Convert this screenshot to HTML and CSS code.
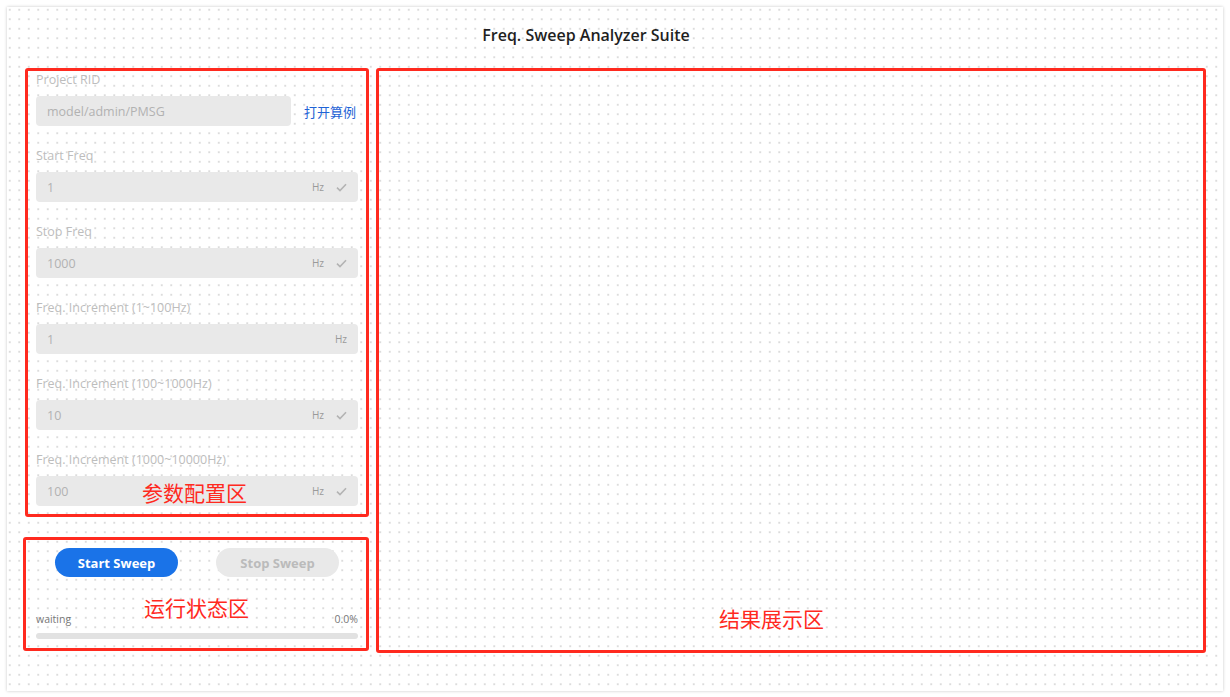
FILE: index.html
```html
<!DOCTYPE html>
<html lang="zh">
<head>
<meta charset="utf-8">
<title>Freq. Sweep Analyzer Suite</title>
<link rel="stylesheet" href="styles.css">
</head>
<body>
<div class="card">
  <h1 class="title">Freq. Sweep Analyzer Suite</h1>
  <div class="main">
    <div class="left">
      <div class="config redbox">
        <div class="field">
          <div class="label">Project RID</div>
          <div class="row">
            <div class="input short"><span class="val">model/admin/PMSG</span></div>
            <a class="link">打开算例</a>
          </div>
        </div>
        <div class="field">
          <div class="label">Start Freq</div>
          <div class="input"><span class="val">1</span><span class="unit">Hz</span><svg class="check" width="11" height="9" viewBox="0 0 11 9"><path d="M1 4.6 L4 7.6 L10 1.2" fill="none" stroke="#b3b3b3" stroke-width="1.6"/></svg></div>
        </div>
        <div class="field">
          <div class="label">Stop Freq</div>
          <div class="input"><span class="val">1000</span><span class="unit">Hz</span><svg class="check" width="11" height="9" viewBox="0 0 11 9"><path d="M1 4.6 L4 7.6 L10 1.2" fill="none" stroke="#b3b3b3" stroke-width="1.6"/></svg></div>
        </div>
        <div class="field">
          <div class="label">Freq. Increment (1~100Hz)</div>
          <div class="input"><span class="val">1</span><span class="unit last">Hz</span></div>
        </div>
        <div class="field">
          <div class="label">Freq. Increment (100~1000Hz)</div>
          <div class="input"><span class="val">10</span><span class="unit">Hz</span><svg class="check" width="11" height="9" viewBox="0 0 11 9"><path d="M1 4.6 L4 7.6 L10 1.2" fill="none" stroke="#b3b3b3" stroke-width="1.6"/></svg></div>
        </div>
        <div class="field">
          <div class="label">Freq. Increment (1000~10000Hz)</div>
          <div class="input"><span class="val">100</span><span class="unit">Hz</span><svg class="check" width="11" height="9" viewBox="0 0 11 9"><path d="M1 4.6 L4 7.6 L10 1.2" fill="none" stroke="#b3b3b3" stroke-width="1.6"/></svg></div>
        </div>
        <span class="note note-config">参数配置区</span>
      </div>
      <div class="status redbox">
        <div class="buttons">
          <button class="btn primary">Start Sweep</button>
          <button class="btn disabled">Stop Sweep</button>
        </div>
        <div class="state">
          <span>waiting</span>
          <span>0.0%</span>
        </div>
        <div class="progress"><div class="bar" style="width:0%"></div></div>
        <span class="note note-status">运行状态区</span>
      </div>
    </div>
    <div class="result redbox">
      <span class="note note-result">结果展示区</span>
    </div>
  </div>
</div>
</body>
</html>
```

FILE: styles.css
```css
html, body {
  margin: 0;
  padding: 0;
  background: #ffffff;
}
body {
  font-family: "Open Sans", "Noto Sans", "Noto Sans CJK SC", sans-serif;
  width: 1230px;
  height: 697px;
  overflow: hidden;
}
.card {
  margin: 7px 0 0 7px;
  width: 1216px;
  height: 684px;
  box-sizing: border-box;
  background-color: #ffffff;
  background-image: radial-gradient(circle, #dcdcdc 0.9px, transparent 1.3px);
  background-size: 9.5px 9.5px;
  background-position: -2px -2px;
  box-shadow: 0 0 3px rgba(0, 0, 0, 0.22);
  display: flex;
  flex-direction: column;
}
.title {
  margin: 18px 0 0;
  padding-right: 58px;
  height: 20px;
  line-height: 20px;
  font-size: 16px;
  font-weight: 600;
  color: #1f1f1f;
  text-align: center;
}
.main {
  margin-top: 23px;
  padding: 0 17px 0 16px;
  display: flex;
  gap: 7px;
}
.redbox {
  border: 3px solid #ff2a1f;
  border-radius: 3px;
  box-sizing: border-box;
  position: relative;
}
.left {
  width: 346px;
  display: flex;
  flex-direction: column;
}
.config {
  margin-left: 2px;
  width: 344px;
  padding: 1px 8px 8px;
}
.field + .field {
  margin-top: 22px;
}
.label {
  font-size: 12.5px;
  line-height: 16px;
  color: #bdbdbd;
  margin-bottom: 8px;
}
.row {
  display: flex;
  align-items: center;
}
.input {
  height: 30px;
  background: #e9e9e9;
  border-radius: 4px;
  display: flex;
  align-items: center;
  padding: 0 11px;
  box-sizing: border-box;
  width: 322px;
}
.input.short {
  width: 255px;
}
.val {
  flex: 1;
  font-size: 12.5px;
  color: #b2b2b2;
}
.unit {
  font-size: 10px;
  color: #9a9a9a;
  margin-right: 12px;
}
.unit.last {
  margin-right: 0;
}
.check {
  display: block;
}
.link {
  margin-left: 13px;
  font-size: 13px;
  color: #1e63d6;
  font-family: "Noto Sans CJK SC", sans-serif;
}
.status {
  margin-top: 20px;
  width: 346px;
  height: 114px;
  padding: 8px 8px 0 10px;
}
.buttons {
  display: flex;
  justify-content: center;
  gap: 38px;
  margin-left: 0;
}
.btn {
  width: 123px;
  height: 29px;
  border: none;
  border-radius: 15px;
  font-family: "Open Sans", sans-serif;
  font-size: 13px;
  font-weight: 700;
  padding: 0;
}
.primary {
  background: #1a73e8;
  color: #fff;
}
.disabled {
  background: #e9e9e9;
  color: #bbbbbb;
}
.state {
  margin-top: 35px;
  display: flex;
  justify-content: space-between;
  font-size: 10.5px;
  line-height: 14px;
  color: #777;
}
.progress {
  margin-top: 7px;
  height: 6px;
  border-radius: 3px;
  background: #e2e2e2;
  overflow: hidden;
}
.bar {
  height: 100%;
  background: #1a73e8;
}
.result {
  width: 830px;
  height: 585px;
}
.note {
  position: absolute;
  font-family: "Noto Sans CJK SC", sans-serif;
  font-size: 21px;
  line-height: 24px;
  color: #ff2a1f;
  white-space: nowrap;
}
.note-config {
  left: 114px;
  top: 409px;
}
.note-status {
  left: 118px;
  top: 55px;
}
.note-result {
  left: 340px;
  top: 535px;
}
```
